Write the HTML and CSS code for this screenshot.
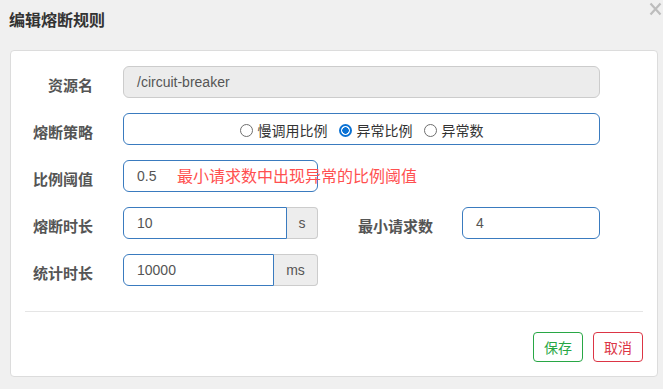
FILE: index.html
```html
<!DOCTYPE html>
<html lang="zh">
<head>
<meta charset="utf-8">
<title>编辑熔断规则</title>
<link rel="stylesheet" href="styles.css">
</head>
<body>
<div class="dialog">
  <div class="dialog-header">
    <h3 class="dialog-title">编辑熔断规则</h3>
    <button class="close" type="button" aria-label="关闭">
      <svg width="13" height="14" viewBox="0 0 13 14"><path d="M1.5 1.5 L11.5 12.5 M11.5 1.5 L1.5 12.5" stroke="#bdbdbd" stroke-width="2.2" fill="none"/></svg>
    </button>
  </div>
  <div class="card">
    <form class="form">
      <div class="row">
        <label class="label">资源名</label>
        <div class="input input-disabled input-wide">/circuit-breaker</div>
      </div>
      <div class="row">
        <label class="label">熔断策略</label>
        <div class="input input-wide radio-box">
          <label class="radio"><input type="radio" name="grade"><span>慢调用比例</span></label>
          <label class="radio"><input type="radio" name="grade" checked><span>异常比例</span></label>
          <label class="radio"><input type="radio" name="grade"><span>异常数</span></label>
        </div>
      </div>
      <div class="row">
        <label class="label">比例阈值</label>
        <div class="hint-wrap">
          <div class="input input-short">0.5</div>
          <span class="hint">最小请求数中出现异常的比例阈值</span>
        </div>
      </div>
      <div class="row">
        <label class="label">熔断时长</label>
        <div class="group">
          <div class="input group-input">10</div>
          <span class="addon addon-s">s</span>
        </div>
        <label class="label label-2">最小请求数</label>
        <div class="input input-min">4</div>
      </div>
      <div class="row">
        <label class="label">统计时长</label>
        <div class="group">
          <div class="input group-input">10000</div>
          <span class="addon addon-ms">ms</span>
        </div>
      </div>
    </form>
    <div class="footer">
      <button class="btn btn-save" type="button">保存</button>
      <button class="btn btn-cancel" type="button">取消</button>
    </div>
  </div>
</div>
</body>
</html>
```
FILE: styles.css
```css
html, body {
  margin: 0;
  padding: 0;
  background: #f0f0f0;
  font-family: "Liberation Sans", "Noto Sans CJK SC", sans-serif;
}

.dialog {
  width: 663px;
  height: 389px;
}

.dialog-header {
  display: flex;
  justify-content: space-between;
  align-items: flex-start;
  height: 50px;
  box-sizing: border-box;
}

.dialog-title {
  margin: 10px 0 0 9px;
  font-size: 16px;
  line-height: 18px;
  font-weight: bold;
  color: #333;
  font-family: "Noto Sans CJK SC", sans-serif;
}

.close {
  margin: 2px 1px 0 0;
  padding: 0;
  border: none;
  background: transparent;
  width: 13px;
  height: 14px;
  display: block;
  line-height: 0;
}

.card {
  margin: 0 5px 0 10px;
  background: #fff;
  border: 1px solid #dcdcdc;
  border-radius: 4px;
  padding: 15px 14px 14px 14px;
}

.form {
  margin: 0 0 25px 0;
}

.row {
  display: flex;
  align-items: center;
  height: 32px;
  margin-bottom: 15px;
}

.row:last-child {
  margin-bottom: 0;
}

.label {
  width: 68px;
  margin-right: 30px;
  text-align: right;
  font-family: "Noto Sans CJK SC", sans-serif;
  font-weight: bold;
  font-size: 15px;
  line-height: 18px;
  color: #555;
  padding-top: 5px;
  white-space: nowrap;
}

.label-2 {
  width: 115px;
  margin-right: 29px;
}

.input {
  box-sizing: border-box;
  height: 32px;
  border: 1px solid #3a7bbf;
  border-radius: 6px;
  padding: 0 13px;
  display: flex;
  align-items: center;
  font-size: 14px;
  color: #555;
  background: #fff;
}

.input-wide {
  width: 477px;
}

.input-disabled {
  background: #ececec;
  border-color: #cccccc;
}

.radio-box {
  justify-content: center;
  padding-top: 2px;
  font-family: "Noto Sans CJK SC", sans-serif;
  color: #333;
}

.radio {
  display: flex;
  align-items: center;
  line-height: 16px;
}

.radio input {
  appearance: none;
  -webkit-appearance: none;
  box-sizing: border-box;
  width: 13px;
  height: 13px;
  margin: 0 5px 0 0;
  border: 1px solid #6e6e6e;
  border-radius: 50%;
  background: #fff;
}

.radio input:checked {
  border: 2px solid #0b72d4;
  background: radial-gradient(circle, #0b72d4 0 3px, #fff 3.5px);
}

.radio + .radio {
  margin-left: 11px;
}

.hint-wrap {
  position: relative;
}

.input-short {
  width: 195px;
}

.hint {
  position: absolute;
  left: 54px;
  top: 5px;
  font-family: "Noto Sans CJK SC", sans-serif;
  font-size: 16px;
  line-height: 20px;
  color: #ff5050;
  white-space: nowrap;
}

.group {
  display: flex;
  width: 195px;
}

.group-input {
  flex: 1;
  border-radius: 6px 0 0 6px;
}

.addon {
  box-sizing: border-box;
  height: 32px;
  display: flex;
  align-items: center;
  justify-content: center;
  background: #ededed;
  border: 1px solid #cccccc;
  border-left: none;
  border-radius: 0 4px 4px 0;
  font-size: 14px;
  color: #555;
}

.addon-s {
  width: 31px;
}

.addon-ms {
  width: 44px;
}

.input-min {
  width: 138px;
}

.footer {
  border-top: 1px solid #e5e5e5;
  padding-top: 20px;
  display: flex;
  justify-content: flex-end;
  gap: 10px;
}

.btn {
  box-sizing: border-box;
  width: 50px;
  height: 30px;
  background: #fff;
  border: 1px solid;
  border-radius: 4px;
  font-family: "Noto Sans CJK SC", sans-serif;
  font-size: 14px;
  padding: 0;
  cursor: pointer;
}

.btn-save {
  color: #28a745;
  border-color: #28a745;
}

.btn-cancel {
  color: #dc3545;
  border-color: #dc3545;
}
```
